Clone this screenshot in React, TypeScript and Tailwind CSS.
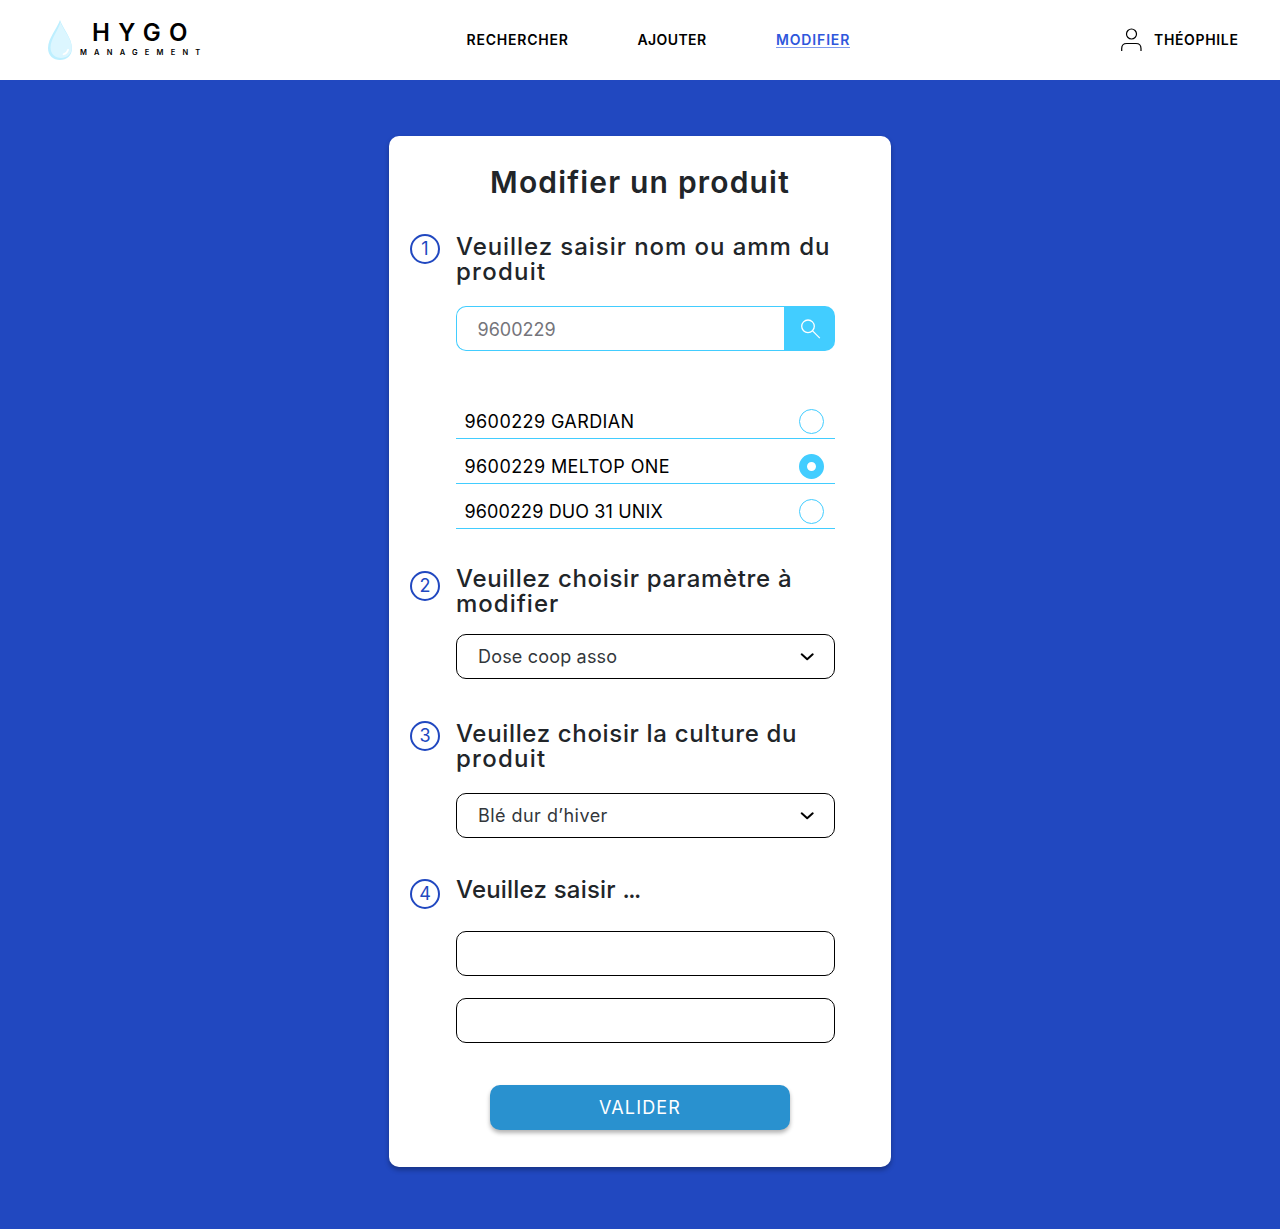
import type { ReactNode } from 'react';

function Step({ n, lines, badge, children, className }: {
  n: number;
  lines: [ReactNode, string][];
  badge: string;
  children: ReactNode;
  className: string;
}) {
  return (
    <section className={`flex items-start gap-4 pl-[21px] pr-14 ${className}`}>
      <span className={`flex size-[30px] shrink-0 items-center justify-center rounded-full border-2 border-[#2148c0] text-[18px] leading-none text-[#2148c0] ${badge}`}>
        {n}
      </span>
      <div className="w-[379px]">
        <h2 className="text-[24px] leading-[25px] font-[460] whitespace-nowrap">
          {lines.map(([text, cls], i) => (
            <span key={i} className={`block ${cls}`}>{text}</span>
          ))}
        </h2>
        {children}
      </div>
    </section>
  );
}

function Select({ value, className }: { value: string; className: string }) {
  return (
    <button type="button" className={`flex h-[45px] w-full items-center justify-between rounded-[10px] border border-black pr-5 pl-[21px] text-[18px] leading-[27px] text-[#33373b] ${className}`}>
      <span>{value}</span>
      <svg width="14" height="8" viewBox="0 0 14 8" className="mt-px" fill="none" stroke="#000" strokeWidth="2" strokeLinecap="round" strokeLinejoin="round">
        <path d="M1.700 1.300 7.200 6.200l5.500-4.900" />
      </svg>
    </button>
  );
}

const products = [
  { name: '9600229 GARDIAN', checked: false, spacing: 'tracking-[0.4px]' },
  { name: '9600229 MELTOP ONE', checked: true, spacing: 'tracking-[0.4px]' },
  { name: '9600229 DUO 31 UNIX', checked: false, spacing: 'tracking-[0.12px]' },
];

export default function App() {
  return (
    <div className="min-h-[1229px] bg-[#2148c0] font-['Inter',sans-serif] text-[#212529]">
      <header className="grid h-20 grid-cols-[466px_1fr_160px] items-center bg-white text-[14px] font-semibold text-black">
        <div className="flex items-center pl-[47px]">
          <svg width="26" height="42" viewBox="0 0 26 42">
            <path d="M13 1C10.500 9 1 19 1 29.200 1 36.500 6.500 41 13 41s12-4.500 12-11.800C25 19 15.500 9 13 1Z" fill="#bdefff" />
            <path d="M13.500 3C12 10 3.500 20 3.500 28.500 3.500 35 8.500 39 14 39c6 0 10.800-4 10.800-10C24.800 19 15.300 10 13.500 3Z" fill="#dcf6ff" />
            <path d="M16.500 35.300c2.500-.7 4-2.300 4.600-4.600" stroke="#fff" strokeWidth="1.700" strokeLinecap="round" fill="none" />
          </svg>
          <div className="-mt-0.5 flex flex-col pl-[7px] leading-none">
            <span className="pl-[12px] text-[24px] leading-6 tracking-[8.3px]">HYGO</span>
            <span className="mt-[3px] text-[7.5px] leading-[10px] tracking-[7.2px]">MANAGEMENT</span>
          </div>
        </div>
        <nav className="flex items-center leading-[20px]">
          <a className="w-[171px] -mt-px pl-[0.5px] tracking-[0.78px]">RECHERCHER</a>
          <a className="w-[139px] -mt-px pl-[0.5px] tracking-[0.4px]">AJOUTER</a>
          <a className="box-content h-[15px] border-b border-[#7f9aee] leading-[15px] tracking-[0.85px] text-[#2f57dc]">MODIFIER</a>
        </nav>
        <div className="flex items-center gap-3">
          <svg width="22" height="24" viewBox="0 0 22 24" fill="none" stroke="#000" strokeWidth="1.200">
            <circle cx="11.500" cy="6" r="5" />
            <path d="M1.700 23v-2.500c0-3 2-5 5-5h9.300c3 0 5 2 5 5V23" />
          </svg>
          <span className="-mt-0.5 tracking-[0.65px]">THÉOPHILE</span>
        </div>
      </header>

      <main className="pt-14">
        <form className="mx-auto flex h-[1031px] w-[502px] flex-col rounded-[10px] bg-white pt-[26px] shadow-[0_3px_5px_rgba(0,0,0,0.3)]">
          <h1 className="text-center text-[30px] leading-[40px] font-semibold tracking-[1.18px]">Modifier un produit</h1>

          <Step
            n={1}
            className="mt-[32px]"
            badge=""
            lines={[['Veuillez saisir nom ou amm du', 'tracking-[0.94px]'], ['produit', 'tracking-[1.26px]']]}
          >
            <div className="mt-[22px] flex h-[45px]">
              <span className="flex-1 rounded-l-[10px] border border-r-0 border-[#42cdff] pt-px pl-[20.5px] text-[18px] leading-[43px] text-[#75757b]">9600229</span>
              <button className="flex w-[51px] items-center justify-center rounded-r-[10px] bg-[#42cdff] pl-[2px]" type="button">
                <svg width="22" height="22" viewBox="0 0 22 22" fill="none" stroke="#fff" strokeWidth="1.300">
                  <circle cx="8" cy="8.300" r="6.300" />
                  <path d="m12.600 12.900 7.200 7.200" />
                </svg>
              </button>
            </div>
            <ul className="mt-[43px]">
              {products.map((p) => (
                <li key={p.name} className="flex h-[45px] items-end justify-between border-b border-[#42cdff] pr-[11px] pb-1 pl-[8.5px] text-[18px] leading-[24px] text-black">
                  <span className={p.spacing}>{p.name}</span>
                  <span className={p.checked ? 'size-[25px] rounded-full border-8 border-[#42cdff]' : 'size-[25px] rounded-full border border-[#42cdff]'} />
                </li>
              ))}
            </ul>
          </Step>

          <Step
            n={2}
            className="mt-[37px]"
            badge="mt-[5px]"
            lines={[['Veuillez choisir paramètre à', 'tracking-[0.67px]'], ['modifier', 'tracking-[1px]']]}
          >
            <Select value="Dose coop asso" className="mt-[18px] tracking-[0.18px]" />
          </Step>

          <Step
            n={3}
            className="mt-[42px]"
            badge=""
            lines={[['Veuillez choisir la culture du', 'tracking-[0.66px]'], ['produit', 'tracking-[1.26px]']]}
          >
            <Select value="Blé dur d’hiver" className="mt-[22px] tracking-[0.46px]" />
          </Step>

          <Step
            n={4}
            className="mt-[39px]"
            badge="mt-[2px]"
            lines={[[<>Veuillez saisir <span className="tracking-[-1.5px]">...</span></>, 'tracking-[0.2px]']]}
          >
            <div className="mt-[29px] h-[45px] rounded-[10px] border border-black" />
            <div className="mt-[22px] h-[45px] rounded-[10px] border border-black" />
          </Step>

          <button type="button" className="mx-auto mt-[42px] h-[45px] w-[300px] rounded-[10px] bg-[#2991cf] pb-px text-[18px] tracking-[1.15px] text-white shadow-[0_3px_4px_rgba(0,0,0,0.3)]">
            VALIDER
          </button>
        </form>
      </main>
    </div>
  );
}
